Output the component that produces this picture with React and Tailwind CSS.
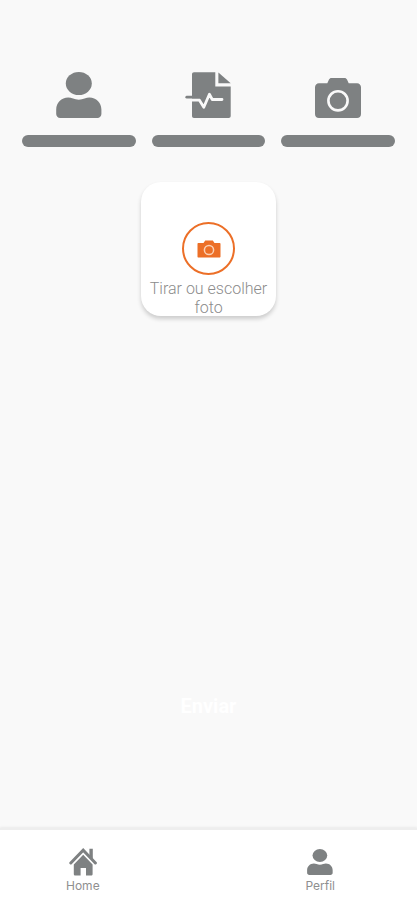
import React from 'react';

function UserIcon({ className }) {
    return (
        <svg viewBox="0 0 46 46" fill="currentColor" className={className} aria-hidden="true">
            <ellipse cx="22.8" cy="11.5" rx="13" ry="11.5" />
            <path d="M0.2 40V37.5C0.2 30.5 5.4 25.5 12.2 25.5C15.4 25.5 18.4 27.7 22.8 27.7C27.2 27.7 30.2 25.5 33.4 25.5C40.2 25.5 45.4 30.5 45.4 37.5V42C45.4 44.3 43.7 46 41.4 46H4.2C1.9 46 0.2 44.3 0.2 42Z" />
        </svg>
    );
}

function ReportIcon({ className }) {
    return (
        <svg viewBox="0 0 46 46" fill="currentColor" className={className} aria-hidden="true">
            <path d="M9 0.3H30.3V14.6H45.7V44C45.7 45.2 44.9 46 43.7 46H9C7.8 46 7 45.2 7 44V2.3C7 1.1 7.8 0.3 9 0.3Z" />
            <path d="M33.4 0.5L45.7 11.3H33.4Z" />
            <path d="M6 28H14.3L18.8 35.2L24.4 22.2L27.2 27.5H37" fill="none" stroke="#f9f9f9" strokeWidth="2.8" strokeLinecap="round" strokeLinejoin="round" />
            <path d="M1.8 25.2H14" fill="none" stroke="currentColor" strokeWidth="2.8" strokeLinecap="round" />
        </svg>
    );
}

function CameraIcon({ className }) {
    return (
        <svg viewBox="0 0 46 40" fill="currentColor" className={className} aria-hidden="true">
            <path d="M4 5.3H12.3L14 1.6C14.5 0.6 15.3 0 16.5 0H29.5C30.7 0 31.5 0.6 32 1.6L33.7 5.3H42C44.4 5.3 46 7 46 9.3V36C46 38.4 44.4 40 42 40H4C1.6 40 0 38.4 0 36V9.3C0 7 1.6 5.3 4 5.3Z" />
            <circle cx="23" cy="22.8" r="9.6" fill="none" stroke="#f9f9f9" strokeWidth="2.6" />
        </svg>
    );
}

function SmallCameraIcon({ className }) {
    return (
        <svg viewBox="0 0 24 18" fill="currentColor" className={className} aria-hidden="true">
            <path d="M1.5 3H6.5L8.2 0.5H15.8L17.5 3H22.5C23.2 3 23.5 3.4 23.5 4V16.5C23.5 17.2 23.1 17.5 22.5 17.5H1.5C0.8 17.5 0.5 17.1 0.5 16.5V4C0.5 3.4 0.8 3 1.5 3Z" />
            <circle cx="12" cy="10" r="4.6" fill="none" stroke="#fbd0b3" strokeWidth="1.5" />
        </svg>
    );
}

function HomeIcon({ className }) {
    return (
        <svg viewBox="0 0 28 28" fill="currentColor" className={className} aria-hidden="true">
            <path d="M20.4 0.8H23.8V11L20.4 7.6Z" />
            <path d="M1.8 15L14.2 2.2L26.4 15" fill="none" stroke="currentColor" strokeWidth="3" strokeLinecap="round" />
            <path d="M14.2 6.8L23.6 16.4V26C23.6 27 23 27.6 22 27.6H17V20H11.6V27.6H6.4C5.4 27.6 4.8 27 4.8 26V16.4Z" />
        </svg>
    );
}

export default function App() {
    return (
        <div className="min-h-screen flex flex-col bg-[#f9f9f9] font-['Roboto',sans-serif]">
            <main className="flex-1 flex flex-col items-center px-[22px] pt-[72px]">
                {/* Steps */}
                <ol className="w-full grid grid-cols-3 gap-4 text-[#7e8182]">
                    <li className="flex flex-col items-center gap-[17px]">
                        <UserIcon className="w-[46px] h-[46px]" />
                        <div className="w-full h-3 rounded-full bg-[#7e8182]" />
                    </li>
                    <li className="flex flex-col items-center gap-[17px]">
                        <ReportIcon className="w-[46px] h-[46px]" />
                        <div className="w-full h-3 rounded-full bg-[#7e8182]" />
                    </li>
                    <li className="flex flex-col items-center gap-[17px]">
                        <div className="h-[46px] flex items-end">
                            <CameraIcon className="w-[46px] h-10" />
                        </div>
                        <div className="w-full h-3 rounded-full bg-[#7e8182]" />
                    </li>
                </ol>

                {/* Photo picker */}
                <button type="button" className="mt-[35px] w-[135px] h-[134px] pt-10 flex flex-col items-center rounded-[20px] bg-white shadow-[0_3px_4px_rgba(0,0,0,0.18)]">
                    <span className="shrink-0 w-[53px] h-[53px] flex items-center justify-center rounded-full border-2 border-[#ec6f27] text-[#ec6f27]">
                        <SmallCameraIcon className="w-6 h-[18px]" />
                    </span>
                    <span className="mt-1 text-base leading-[19px] font-light text-[#8c8c8c]">
                        Tirar ou escolher foto
                    </span>
                </button>

                <button type="button" className="mt-auto mb-[98px] w-full h-12 text-xl font-bold text-white">
                    Enviar
                </button>
            </main>

            <nav className="flex items-start justify-between pl-[66px] pr-[82px] pt-[18px] pb-2 border-t-2 border-[#eeeeee] bg-white shadow-[0_-1px_2px_rgba(0,0,0,0.06)] text-[#7e8182]">
                <a href="#home" className="flex flex-col items-center gap-1">
                    <HomeIcon className="w-7 h-7" />
                    <span className="text-xs leading-3 font-['Inter',sans-serif] text-[#8f8f8f]">Home</span>
                </a>
                <a href="#perfil" className="flex flex-col items-center gap-1">
                    <UserIcon className="w-[26px] h-7" />
                    <span className="text-xs leading-3 font-['Inter',sans-serif] text-[#8f8f8f]">Perfil</span>
                </a>
            </nav>
        </div>
    );
}
